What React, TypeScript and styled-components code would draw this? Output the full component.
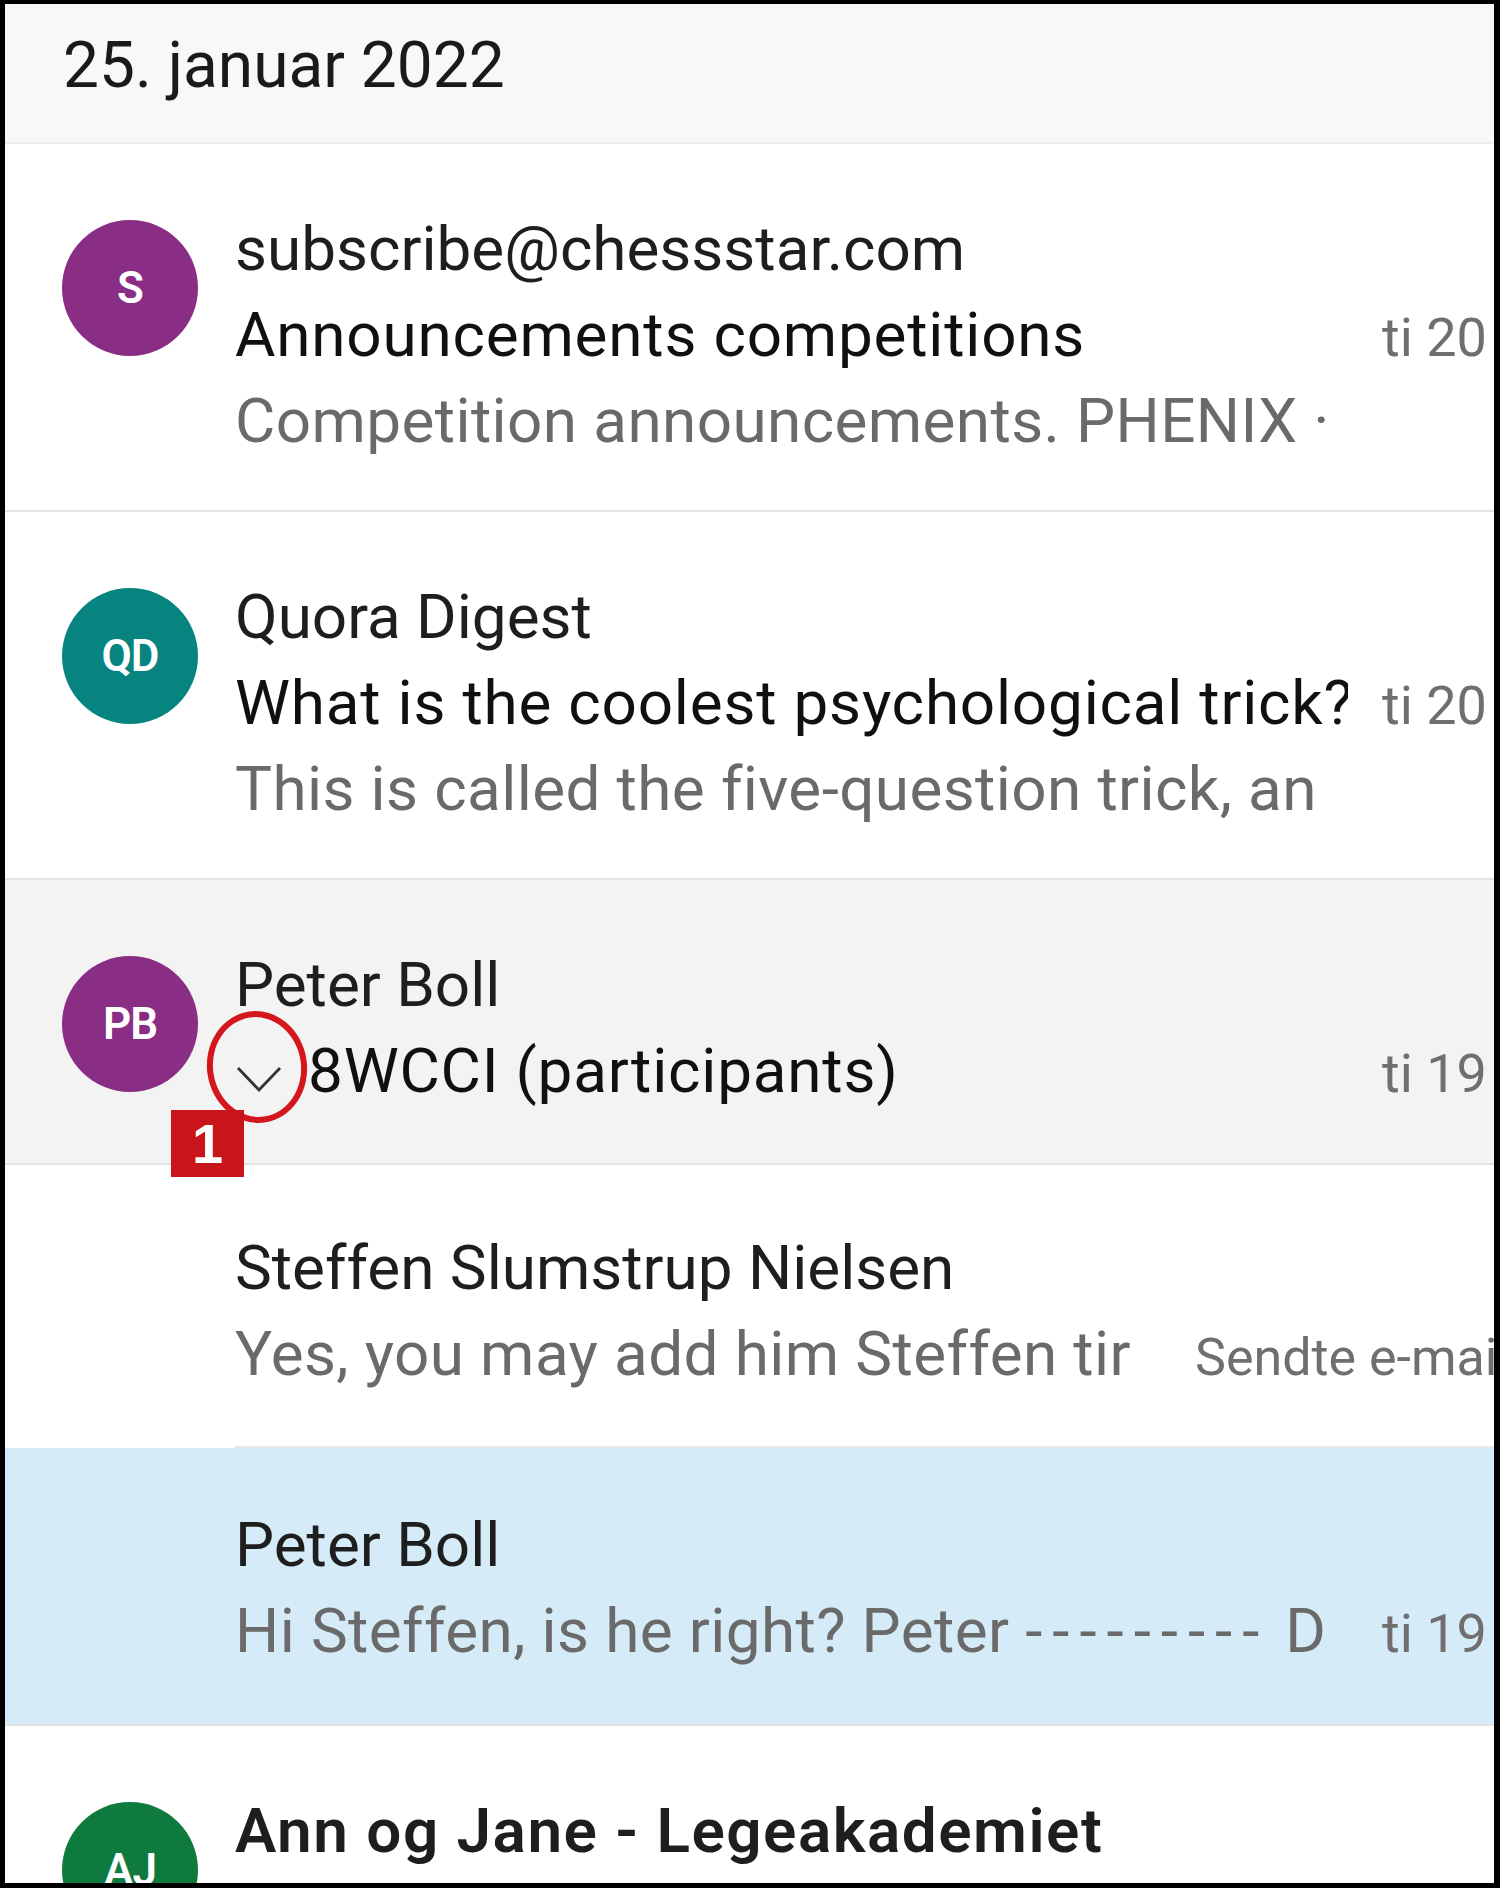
import React from 'react';
import styled, { createGlobalStyle } from 'styled-components';

const GlobalStyle = createGlobalStyle`
  html, body {
    margin: 0;
    padding: 0;
    background: #fff;
  }
  body {
    font-family: Roboto, "Noto Sans", "Open Sans", sans-serif;
  }
  * {
    box-sizing: border-box;
  }
`;

type Divider = 'full' | 'indent' | 'none';
type Tone = 'name' | 'subject' | 'preview';

const TEXT_COL = 1113;

const Frame = styled.div`
  width: 1500px;
  height: 1888px;
  border-style: solid;
  border-color: #000;
  border-width: 4px 6px 5px 5px;
  background: #fff;
  overflow: hidden;
`;

const DateHeader = styled.div`
  height: 140px;
  padding: 19px 0 0 58px;
  background: #f8f8f8;
  border-bottom: 2px solid #ececec;
  font-size: 64px;
  line-height: 86px;
  color: #1a1a1a;
  white-space: nowrap;
`;

const Row = styled.div<{ $bg: string; $divider: Divider }>`
  position: relative;
  display: flex;
  align-items: flex-start;
  background: ${(p) => p.$bg};
  border-bottom: ${(p) => (p.$divider === 'full' ? '2px solid #e3e3e3' : 'none')};
`;

const AvatarSlot = styled.div<{ $pt: number }>`
  flex: 0 0 230px;
  padding: ${(p) => p.$pt + 14}px 0 0 57px;
`;

const Avatar = styled.div<{ $color: string }>`
  width: 136px;
  height: 136px;
  border-radius: 50%;
  background: ${(p) => p.$color};
  color: #fff;
  display: flex;
  align-items: center;
  justify-content: center;
  font-size: 44px;
  font-weight: 600;
  letter-spacing: -1px;
`;

const Body = styled.div<{ $pt: number; $pb: number; $divider: boolean }>`
  flex: 1 0 auto;
  min-width: 0;
  padding: ${(p) => p.$pt}px 0 ${(p) => p.$pb}px;
  border-bottom: ${(p) => (p.$divider ? '2px solid #ebe5e5' : 'none')};
`;

const Line = styled.div`
  display: flex;
  align-items: baseline;
  height: 86px;
  line-height: 86px;
  white-space: nowrap;
`;

const toneColor: Record<Tone, string> = {
  name: '#1e1e1e',
  subject: '#101010',
  preview: '#6a6a6a',
};

const toneSpacing: Record<Tone, number> = {
  name: 0,
  subject: 0.8,
  preview: 0.4,
};

const Main = styled.span<{ $tone: Tone; $width?: number; $bold?: boolean }>`
  flex: 0 0 ${(p) => p.$width ?? TEXT_COL}px;
  overflow: hidden;
  font-size: 62px;
  font-weight: ${(p) => (p.$bold ? 600 : 400)};
  letter-spacing: ${(p) => (p.$bold ? 1.5 : toneSpacing[p.$tone])}px;
  color: ${(p) => toneColor[p.$tone]};
`;

const Dashes = styled.span`
  letter-spacing: 10px;
`;

const Meta = styled.span<{ $size: number; $gap: number }>`
  flex: 0 0 auto;
  margin-left: ${(p) => p.$gap}px;
  font-size: ${(p) => p.$size}px;
  color: #6f6f6f;
`;

const Chevron = styled.svg`
  width: 48px;
  height: 30px;
  margin-right: 25px;
  vertical-align: -2px;
`;

const Ring = styled.div`
  position: absolute;
  left: 202px;
  top: 131px;
  width: 100px;
  height: 112px;
  border: 6px solid #d4171c;
  border-radius: 50%;
  transform: rotate(-8deg);
  pointer-events: none;
`;

const Badge = styled.div`
  position: absolute;
  left: 166px;
  top: 230px;
  width: 73px;
  height: 67px;
  z-index: 2;
  background: #c8141b;
  color: #fff;
  display: flex;
  align-items: center;
  justify-content: center;
  font-family: "Liberation Sans", Arial, sans-serif;
  font-weight: 700;
  font-size: 56px;
  line-height: 1;
`;

interface MessageProps {
  avatar?: { initials: string; color: string };
  sender: string;
  unread?: boolean;
  subject?: string;
  chevron?: boolean;
  date?: string;
  preview?: React.ReactNode;
  folder?: string;
  bg?: string;
  divider: Divider;
  pt: number;
  pb: number;
  children?: React.ReactNode;
}

const Message: React.FC<MessageProps> = ({
  avatar,
  sender,
  unread,
  subject,
  chevron,
  date,
  preview,
  folder,
  bg = '#fff',
  divider,
  pt,
  pb,
  children,
}) => (
  <Row $bg={bg} $divider={divider}>
    <AvatarSlot $pt={pt}>
      {avatar && <Avatar $color={avatar.color}>{avatar.initials}</Avatar>}
    </AvatarSlot>
    <Body $pt={pt} $pb={pb} $divider={divider === 'indent'}>
      <Line>
        <Main $tone='name' $bold={unread}>
          {sender}
        </Main>
      </Line>
      {subject && (
        <Line>
          <Main $tone='subject'>
            {chevron && (
              <Chevron viewBox='0 0 48 30'>
                <polyline
                  points='3,4 24,26 45,4'
                  fill='none'
                  stroke='#333'
                  strokeWidth='2.8'
                />
              </Chevron>
            )}
            {subject}
          </Main>
          {date && (
            <Meta $size={54} $gap={34}>
              {date}
            </Meta>
          )}
        </Line>
      )}
      {preview && (
        <Line>
          <Main $tone='preview' $width={folder ? 923 : TEXT_COL}>
            {preview}
          </Main>
          {folder && (
            <Meta $size={52} $gap={37}>
              {folder}
            </Meta>
          )}
          {!subject && date && (
            <Meta $size={54} $gap={34}>
              {date}
            </Meta>
          )}
        </Line>
      )}
    </Body>
    {children}
  </Row>
);

const App: React.FC = () => (
  <>
    <GlobalStyle />
    <Frame>
      <DateHeader>25. januar 2022</DateHeader>

      <Message
        avatar={{ initials: 'S', color: '#8a2d84' }}
        sender='subscribe@chessstar.com'
        subject='Announcements competitions'
        date='ti 20'
        preview='Competition announcements. PHENIX ·'
        divider='full'
        pt={62}
        pb={46}
      />

      <Message
        avatar={{ initials: 'QD', color: '#07847f' }}
        sender='Quora Digest'
        subject='What is the coolest psychological trick?'
        date='ti 20'
        preview='This is called the five-question trick, an'
        divider='full'
        pt={62}
        pb={46}
      />

      <Message
        avatar={{ initials: 'PB', color: '#8a2d84' }}
        sender='Peter Boll'
        subject='8WCCI (participants)'
        chevron
        date='ti 19'
        bg='#f3f3f3'
        divider='full'
        pt={62}
        pb={49}
      >
        <Ring />
        <Badge>1</Badge>
      </Message>

      <Message
        sender='Steffen Slumstrup Nielsen'
        preview='Yes, you may add him Steffen tir'
        folder='Sendte e-mail'
        divider='indent'
        pt={60}
        pb={49}
      />

      <Message
        sender='Peter Boll'
        preview={
          <>
            Hi Steffen, is he right? Peter <Dashes>---------</Dashes> D
          </>
        }
        date='ti 19'
        bg='#d5ebf7'
        divider='full'
        pt={54}
        pb={50}
      />

      <Message
        avatar={{ initials: 'AJ', color: '#0f7a3d' }}
        sender='Ann og Jane - Legeakademiet'
        unread
        subject='Nyhedsbrev'
        date='ti 19'
        preview='Kære alle'
        divider='none'
        pt={62}
        pb={46}
      />
    </Frame>
  </>
);

export default App;
